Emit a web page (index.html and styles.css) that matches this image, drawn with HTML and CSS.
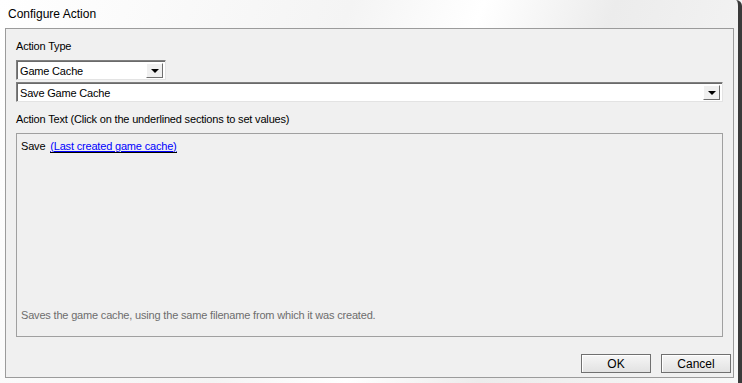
FILE: index.html
```html
<!DOCTYPE html>
<html lang="en">
<head>
  <meta charset="UTF-8" />
  <title>Configure Action</title>
  <link rel="stylesheet" href="styles.css">
</head>
<body>

  <div class="window">
    <div class="title-bar">Configure Action</div>

    <div class="panel">
      <div class="label">Action Type</div>

      <div class="combo combo-small">
        <span class="combo-value">Game Cache</span>
        <span class="combo-arrow"></span>
      </div>

      <div class="combo combo-wide">
        <span class="combo-value">Save Game Cache</span>
        <span class="combo-arrow"></span>
      </div>

      <div class="label label-text">Action Text (Click on the underlined sections to set values)</div>

      <div class="text-box">
        <div class="action-line">
          Save <a class="param" href="#">(Last created game cache)</a>
        </div>
        <div class="description">Saves the game cache, using the same filename from which it was created.</div>
      </div>

      <div class="buttons">
        <button class="btn">OK</button>
        <button class="btn">Cancel</button>
      </div>
    </div>
  </div>

</body>
</html>
```

FILE: styles.css
```css
body {
  margin: 0;
  width: 742px;
  height: 383px;
  overflow: hidden;
  font-family: 'Liberation Sans', Arial, sans-serif;
  font-size: 11px;
  letter-spacing: -0.18px;
  color: #000;
  background: linear-gradient(110deg, #ffffff 0%, #f4f4f4 40%, #ffffff 55%, #ececec 70%, #f8f8f8 100%);
}

.window {
  height: 383px;
  box-sizing: border-box;
  border-right: 4px solid #3a3a3a;
  border-top-right-radius: 6px;
  display: flex;
  flex-direction: column;
}

.title-bar {
  height: 28px;
  line-height: 28px;
  padding-left: 8px;
  font-size: 12px;
  letter-spacing: 0;
  color: #000;
}

.panel {
  flex: 1;
  margin: 0 4px 5px 5px;
  padding: 10px 10px 0 10px;
  background: #f0f0f0;
  border: 1px solid #9b9b9b;
  display: flex;
  flex-direction: column;
}

.label {
  height: 14px;
  line-height: 14px;
}

.combo {
  box-sizing: border-box;
  height: 20px;
  flex-shrink: 0;
  background: #fff;
  border: 1px solid #7f7f7f;
  border-right-color: #e3e3e3;
  border-bottom-color: #e3e3e3;
  box-shadow: inset 1px 1px 0 #6a6a6a;
  display: flex;
  align-items: center;
  justify-content: space-between;
  padding: 0 2px 0 3px;
}

.combo-small {
  width: 150px;
  margin-top: 7px;
}

.combo-wide {
  margin-top: 2px;
}

.combo-value {
  padding-top: 1px;
}

.combo-arrow {
  box-sizing: border-box;
  width: 17px;
  height: 15px;
  background: #f0f0f0;
  border: 1px solid #6f6f6f;
  border-top-color: #fff;
  border-left-color: #fff;
  position: relative;
}

.combo-arrow::after {
  content: "";
  position: absolute;
  left: 4px;
  top: 5px;
  border-left: 4px solid transparent;
  border-right: 4px solid transparent;
  border-top: 4px solid #000;
}

.label-text {
  margin-top: 10px;
}

.text-box {
  height: 204px;
  flex-shrink: 0;
  margin-top: 7px;
  box-sizing: border-box;
  border: 1px solid #a0a0a0;
  padding: 6px 4px 15px 4px;
  display: flex;
  flex-direction: column;
  justify-content: space-between;
}

.param {
  color: #0000ff;
  text-decoration: underline;
  border-bottom: 1px solid #000;
  margin-left: 2px;
}

.description {
  color: #6d6d6d;
}

.buttons {
  display: flex;
  justify-content: flex-end;
  gap: 10px;
  margin-top: 17px;
  margin-right: -8px;
}

.btn {
  width: 70px;
  height: 19px;
  font-family: 'Liberation Sans', Arial, sans-serif;
  font-size: 12px;
  padding: 0;
  background: linear-gradient(#f6f6f6, #e2e2e2);
  border: 1px solid #707070;
  box-shadow: inset 1px 1px 0 #fff;
  color: #000;
}
```
